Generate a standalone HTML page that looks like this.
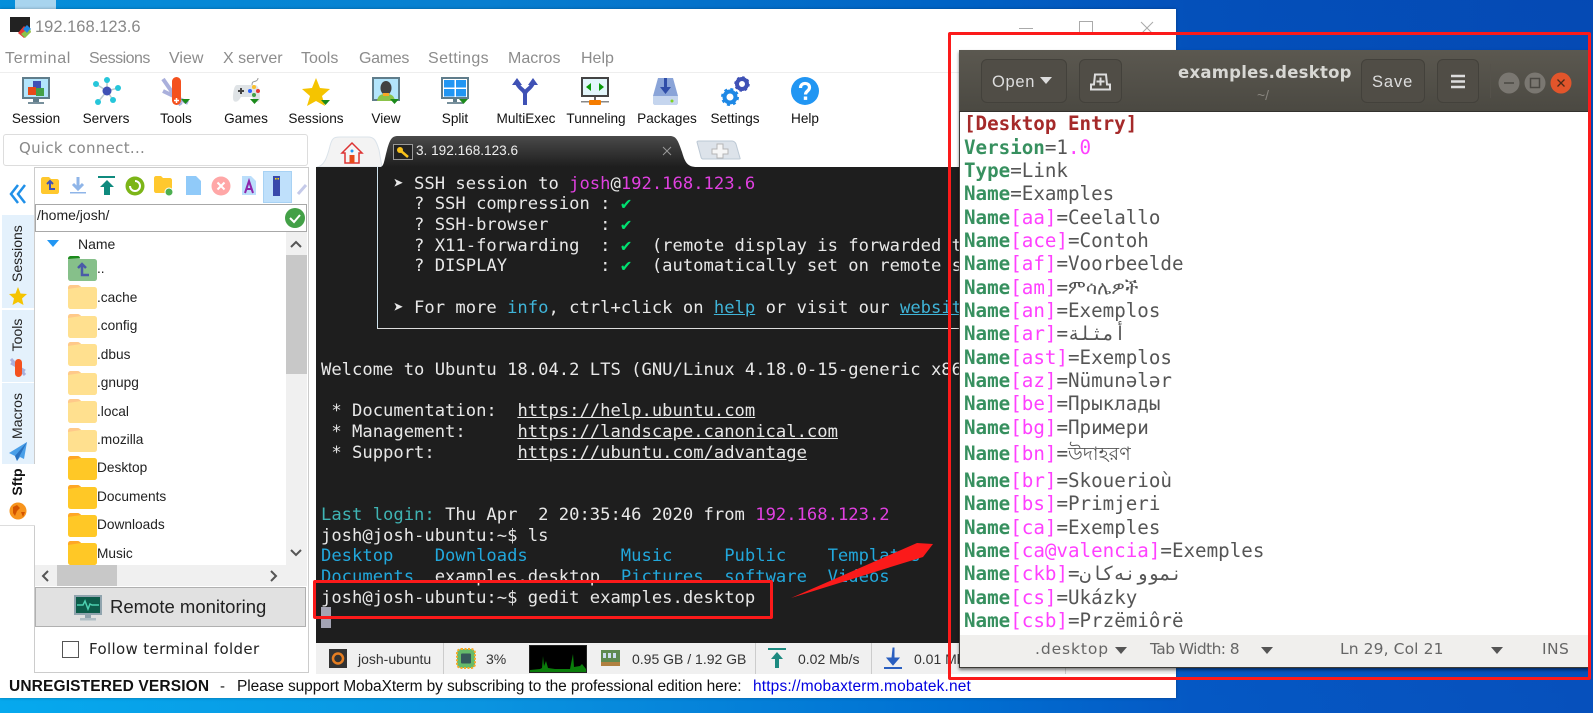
<!DOCTYPE html>
<html><head><meta charset="utf-8"><style>
html,body{margin:0;padding:0}
body{width:1593px;height:713px;overflow:hidden;position:relative;font-family:"Liberation Sans",sans-serif;background:linear-gradient(180deg,rgba(0,50,150,.22),rgba(0,50,150,0)),linear-gradient(90deg,#06a9ee 0,#0a94e0 30%,#0070d2 60%,#0558c4 75%,#0650bc 100%)}
.a{position:absolute}
.t{position:absolute;white-space:nowrap;line-height:1}
svg{position:absolute;overflow:visible}
.m{font-size:16px;color:#8c8c8c;top:51px}
.l{font-size:13.6px;color:#111;top:112px;width:80px;text-align:center}
.f{font-size:13.7px;color:#222;left:97px}
#term{position:absolute;left:321px;top:173.6px;margin:0;font:17.18px/20.7px "DejaVu Sans Mono",monospace;color:#e8e8e8;white-space:pre}
.c{color:#22a8dc}.p{color:#e040e0}.u{text-decoration:underline}.k{color:#00e070}.ci{color:#3fb4d8;}
#ged div{height:23.35px;line-height:23.35px;white-space:pre}
#ged b{color:#37905f}#ged i{font-style:normal;color:#ff40ff}
.v{position:absolute;transform:rotate(-90deg);white-space:nowrap;font-size:14px;color:#222;line-height:1}
.s{font-size:14px;color:#333;top:652px}
.g{font-size:15.5px;color:#666;top:642px;font-family:"DejaVu Sans",sans-serif}
.b{position:absolute;background:#504d46;border:1px solid #43413b;border-radius:6px;box-sizing:border-box}
</style></head><body>
<div class="a" style="left:15px;top:0;width:41px;height:9px;background:#a8d4ee"></div>
<div class="a" style="left:0;top:9px;width:1176px;height:689px;background:#fff;box-shadow:0 0 3px rgba(0,0,0,.3)"></div>
<svg style="left:10px;top:17px" width="21" height="21" viewBox="0 0 21 21"><rect y="0" width="20" height="15" fill="#222"/><path d="M8 16l6-7 7 6-7 6z" fill="#e53935"/><path d="M13 12l4-4 4 4-4 4z" fill="#1e88e5"/><path d="M11 17l4-3 2 2 3-4 1 3-6 6z" fill="#8bc34a"/></svg>
<div class="t" style="left:35px;top:19px;font-size:16.5px;color:#888">192.168.123.6</div>
<div class="a" style="left:1019px;top:28px;width:14px;height:1px;background:#aaa"></div>
<div class="a" style="left:1079px;top:21px;width:12px;height:12px;border:1px solid #aaa"></div>
<svg style="left:1140px;top:21px" width="14" height="14"><path d="M1 1l12 12M13 1L1 13" stroke="#aaa" fill="none"/></svg>
<div class="t m" style="left:5px;letter-spacing:.7px">Terminal</div><div class="t m" style="left:89px;letter-spacing:-.5px">Sessions</div><div class="t m" style="left:169px">View</div><div class="t m" style="left:223px">X server</div><div class="t m" style="left:301px">Tools</div><div class="t m" style="left:359px;letter-spacing:-.3px">Games</div><div class="t m" style="left:428px;letter-spacing:.4px">Settings</div><div class="t m" style="left:508px">Macros</div><div class="t m" style="left:581px">Help</div>
<div class="a" style="left:0;top:72px;width:1176px;height:1px;background:#eee"></div>

<svg style="left:22px;top:77px" width="29" height="29"><rect width="28" height="22" fill="#607d8b"/><rect x="2" y="2" width="24" height="18" fill="#b3e5fc"/><rect x="11" y="22" width="6" height="4" fill="#607d8b"/><rect x="6" y="25" width="16" height="2" fill="#78909c"/><rect x="11" y="4" width="8" height="8" fill="#3f51b5"/><rect x="6" y="10" width="8" height="8" fill="#e64a19"/><rect x="14" y="11" width="8" height="8" fill="#43a047"/></svg>
<svg style="left:92px;top:77px" width="30" height="29"><path d="M15 14L4 7M15 14L15 3M15 14L26 11M15 14L21 23M15 14L6 25" stroke="#bcc" stroke-width="1.5"/><circle cx="15" cy="14" r="4.5" fill="#3f51b5"/><circle cx="4" cy="7" r="3" fill="#26c6da"/><circle cx="15" cy="3" r="3" fill="#26c6da"/><circle cx="26" cy="11" r="3" fill="#26c6da"/><circle cx="21" cy="23" r="3" fill="#26c6da"/><circle cx="6" cy="25" r="3" fill="#26c6da"/></svg>
<svg style="left:162px;top:77px" width="30" height="29"><path d="M1 2l18 26M26 26L1 14" stroke="#aab0dc" stroke-width="4"/><rect x="10" y="0" width="9" height="28" rx="4.5" fill="#f4511e"/><path d="M14.500 21v5M12 23.500h5" stroke="#fff" stroke-width="1.500"/><path d="M19 22h9l-4.500 5z" fill="#1b8a1b"/></svg>
<svg style="left:232px;top:77px" width="30" height="29"><path d="M20 8c0-4 2-3 4-4s2-2 2-3" stroke="#999" fill="none"/><path d="M5 8h18c4 0 5 8 5 13 0 5-4 5-6 2l-2-3H9l-2 3c-3 3-6 2-6-2 0-5 1-13 4-13z" fill="#dfe3e6"/><rect x="6" y="13" width="6" height="2" fill="#444"/><rect x="8" y="11" width="2" height="6" fill="#444"/><circle cx="22" cy="10" r="2" fill="#fbc02d"/><circle cx="18" cy="14" r="2" fill="#2962ff"/><circle cx="26" cy="14" r="2" fill="#e53935"/><circle cx="22" cy="18" r="2" fill="#43a047"/><path d="M18 22h9l-4.500 5z" fill="#1b8a1b"/></svg>
<svg style="left:302px;top:78px" width="30" height="28"><path d="M14 0l4 10 10 1-8 7 3 10-9-5-9 5 3-10-8-7 10-1z" fill="#f5c400"/><path d="M19 22h9l-4.500 5z" fill="#1b8a1b"/></svg>
<svg style="left:372px;top:77px" width="30" height="29"><rect width="28" height="24" fill="#607d8b"/><rect x="2" y="2" width="24" height="20" fill="#b3e5fc"/><path d="M5 24c1-6 4-7 9-7s8 1 9 7z" fill="#8bc34a"/><ellipse cx="14" cy="11" rx="5.500" ry="7" fill="#424242"/><rect x="11" y="16" width="6" height="3" fill="#f9a825"/><path d="M18 22h9l-4.500 5z" fill="#1b8a1b"/></svg>
<svg style="left:441px;top:77px" width="30" height="29"><rect width="28" height="22" fill="#607d8b"/><rect x="2" y="2" width="24" height="18" fill="#fff"/><rect x="3" y="3" width="10.500" height="7.500" fill="#2196f3"/><rect x="15" y="3" width="10" height="7.500" fill="#2196f3"/><rect x="3" y="12" width="10.500" height="7.500" fill="#2196f3"/><rect x="15" y="12" width="10" height="7.500" fill="#2196f3"/><rect x="6" y="25" width="16" height="2" fill="#78909c"/><rect x="12" y="22" width="4" height="3" fill="#607d8b"/><path d="M18 22h9l-4.500 5z" fill="#1b8a1b"/></svg>
<svg style="left:511px;top:77px" width="29" height="29"><path d="M14 28V17C14 13 8 12 6 6M14 17C14 13 20 12 22 6" stroke="#3f51b5" stroke-width="4" fill="none"/><path d="M1 8l5-7 5 7zM17 8l5-7 5 7z" fill="#3f51b5"/></svg>
<svg style="left:581px;top:77px" width="29" height="29"><rect width="28" height="20" fill="#444"/><rect x="2" y="2" width="24" height="16" fill="#e3f6fb"/><path d="M5 10l5-4v8zM14 10h-4M23 10l-5-4v8z" fill="#0a9a0a"/><rect x="13" y="20" width="2" height="4" fill="#666"/><rect y="24" width="28" height="1.500" fill="#888"/><rect x="8" y="23" width="12" height="5" rx="1" fill="#f57c00"/></svg>
<svg style="left:652px;top:77px" width="27" height="29"><path d="M6 1h15l5 18v6c0 2-1 3-3 3H4c-2 0-3-1-3-3v-6z" fill="#8aa4d8"/><path d="M1 19h25v6c0 2-1 3-3 3H4c-2 0-3-1-3-3z" fill="#c5d5ee"/><rect x="12" y="1" width="3" height="10" fill="#2f4da8"/><path d="M8 10h11l-5.500 7z" fill="#2f4da8"/><circle cx="20" cy="24" r="1.500" fill="#7ed321"/></svg>
<svg style="left:721px;top:77px" width="30" height="29"><circle cx="21" cy="7" r="5" fill="none" stroke="#3f51b5" stroke-width="4"/><circle cx="21" cy="7" r="7" fill="none" stroke="#3f51b5" stroke-width="1.500" stroke-dasharray="2.500 3"/><circle cx="9" cy="20" r="5.500" fill="none" stroke="#1e88e5" stroke-width="4"/><circle cx="9" cy="20" r="8" fill="none" stroke="#1e88e5" stroke-width="2" stroke-dasharray="3 3.300"/></svg>
<svg style="left:791px;top:77px" width="29" height="29"><circle cx="14" cy="14" r="14" fill="#2196f3"/><path d="M9.500 11c0-6 9-6 9-.5 0 3.500-4 3.500-4 7" stroke="#fff" stroke-width="3.200" fill="none"/><rect x="12.800" y="19.500" width="3.400" height="3.400" fill="#fff"/></svg>

<div class="t l" style="left:-4px">Session</div><div class="t l" style="left:66px">Servers</div><div class="t l" style="left:136px">Tools</div><div class="t l" style="left:206px">Games</div><div class="t l" style="left:276px">Sessions</div><div class="t l" style="left:346px">View</div><div class="t l" style="left:415px">Split</div><div class="t l" style="left:486px">MultiExec</div><div class="t l" style="left:556px">Tunneling</div><div class="t l" style="left:627px">Packages</div><div class="t l" style="left:695px">Settings</div><div class="t l" style="left:765px">Help</div>

<div class="a" style="left:3px;top:134px;width:303px;height:30px;border:1px solid #ddd;border-radius:3px"></div>
<div class="t" style="left:19px;top:141px;font:15px/1 'DejaVu Sans',sans-serif;color:#888;letter-spacing:.3px">Quick connect...</div>

<svg style="left:316px;top:136px" width="440" height="32"><path d="M1 31C8 30 11 22 14 10 16 2 18 1 24 1H52C58 1 60 4 63 14L66 31z" fill="#f3f3f3" stroke="#dbe3ea"/><path d="M64 31C68 31 68 25 71 14 74 3 76 0 82 0H354C360 0 362 4 366 16 369 26 371 31 381 31z" fill="url(#tg)"/><defs><linearGradient id="tg" x1="0" y1="0" x2="0" y2="1"><stop offset="0" stop-color="#4a4a4a"/><stop offset="1" stop-color="#1e1e1e"/></linearGradient></defs><path d="M381 6c0-1 1-1 2-1h33c2 0 3 1 4 3l4 14c.5 1 0 1-1 1H387c-1 0-2-1-2-2z" fill="#dde3ea" stroke="#bcc8d4"/><path d="M401 8h6v5h5v5h-5v4h-6v-4h-5v-5h5z" fill="#f6f6f6" stroke="#b5b5b5"/></svg>
<svg style="left:342px;top:143px" width="20" height="20"><path d="M10 0L0 10h3v10h14V10h3z" fill="#f5f5f5" stroke="#d33" stroke-width="1.500"/><rect x="7.500" y="12" width="5" height="8" fill="#e64a19"/><circle cx="10" cy="8" r="1.500" fill="#2196f3"/></svg>
<div class="a" style="left:393px;top:144px;width:18px;height:14px;border:1px solid #999;background:#222"></div>
<svg style="left:395px;top:146px" width="16" height="12"><circle cx="5" cy="4" r="3" fill="#f9c21a"/><path d="M6 5l7 6" stroke="#f9c21a" stroke-width="2.500"/></svg>
<div class="t" style="left:416px;top:144px;font-size:13.6px;color:#eee">3. 192.168.123.6</div>
<svg style="left:662px;top:146px" width="10" height="10"><path d="M1 1l8 8M9 1L1 9" stroke="#999" stroke-width="1"/></svg>

<div class="a" style="left:316px;top:167px;width:860px;height:476px;background:#1e1e1e"></div>
<div class="a" style="left:377px;top:167px;width:1px;height:162px;background:#cfe3ee"></div>
<div class="a" style="left:377px;top:328px;width:600px;height:1px;background:#ddd"></div>
<pre id="term">       ➤ SSH session to <span class="p">josh</span>@<span class="p">192.168.123.6</span>
         ? SSH compression : <span class="k">✔</span>
         ? SSH-browser     : <span class="k">✔</span>
         ? X11-forwarding  : <span class="k">✔</span>  (remote display is forwarded through SSH)
         ? DISPLAY         : <span class="k">✔</span>  (automatically set on remote server)

       ➤ For more <span class="ci">info</span>, ctrl+click on <span class="ci u">help</span> or visit our <span class="ci u">website</span>


Welcome to Ubuntu 18.04.2 LTS (GNU/Linux 4.18.0-15-generic x86_64)

 * Documentation:  <span class="u">https://help.ubuntu.com</span>
 * Management:     <span class="u">https://landscape.canonical.com</span>
 * Support:        <span class="u">https://ubuntu.com/advantage</span>


<span style="color:#3fb4b4">Last login:</span> Thu Apr  2 20:35:46 2020 from <span class="p">192.168.123.2</span>
josh@josh-ubuntu:~$ ls
<span class="c">Desktop    Downloads         Music     Public    Templates</span>
<span class="c">Documents</span>  examples.desktop  <span class="c">Pictures  software  Videos</span>
josh@josh-ubuntu:~$ gedit examples.desktop</pre>
<div class="a" style="left:321px;top:607px;width:10px;height:21px;background:#a4a4b4"></div>

<div class="a" style="left:316px;top:643px;width:860px;height:31px;background:#f0f0f0"></div>
<div class="a" style="left:443px;top:643px;width:1px;height:31px;background:#ccc"></div><div class="a" style="left:755px;top:643px;width:1px;height:31px;background:#ccc"></div><div class="a" style="left:871px;top:643px;width:1px;height:31px;background:#ccc"></div><div class="a" style="left:1065px;top:643px;width:1px;height:31px;background:#ccc"></div>
<svg style="left:329px;top:649px" width="18" height="19"><rect width="18" height="19" fill="#333"/><circle cx="9" cy="9.500" r="5" fill="none" stroke="#e67e22" stroke-width="2.500"/></svg>
<div class="t s" style="left:358px">josh-ubuntu</div>
<svg style="left:456px;top:648px" width="20" height="21"><rect x="1" y="1" width="18" height="19" rx="4" fill="#66bb6a" stroke="#f9a825" stroke-dasharray="2 1.500" stroke-width="2"/><rect x="5" y="5.500" width="10" height="10" rx="1" fill="#37595a"/></svg>
<div class="t s" style="left:486px">3%</div>
<div class="a" style="left:529px;top:645px;width:58px;height:28px;background:#000;border:1px solid #222;box-sizing:border-box"></div>
<svg style="left:530px;top:646px" width="56" height="26"><path d="M0 26V24L10 23 12 22 13 10 14 20 16 15 18 22 25 23 40 23 43 8 44 21 50 20 52 18 56 23V26z" fill="#0a7d0a"/></svg>
<svg style="left:601px;top:650px" width="20" height="17"><rect width="19" height="12" fill="#5d8a50"/><rect x="2" y="3" width="3" height="5" fill="#cde"/><rect x="7" y="3" width="3" height="5" fill="#cde"/><rect x="12" y="3" width="3" height="5" fill="#cde"/><rect y="12" width="19" height="4" fill="#b08040"/></svg>
<div class="t s" style="left:632px">0.95 GB / 1.92 GB</div>
<svg style="left:768px;top:648px" width="19" height="21"><rect width="18" height="2" fill="#1c8a80"/><path d="M9 4l6 7h-4v9H7v-9H3z" fill="#1c8a80"/></svg>
<div class="t s" style="left:798px">0.02 Mb/s</div>
<svg style="left:884px;top:648px" width="19" height="21"><path d="M9 0h1v10h5l-6 7-6-7h5z" fill="#2a5fc0" stroke="#2a5fc0"/><rect y="19" width="18" height="2" fill="#2a5fc0"/></svg>
<div class="t s" style="left:914px">0.01 Mb/s</div>

<div class="t" style="left:9px;top:679px;font-size:15.5px;font-weight:bold;color:#111;letter-spacing:.15px">UNREGISTERED VERSION</div>
<div class="t" style="left:220px;top:679px;font-size:15px;color:#111">-</div>
<div class="t" style="left:237px;top:679px;font-size:15.5px;color:#111;letter-spacing:-.1px">Please support MobaXterm by subscribing to the professional edition here:</div>
<div class="t" style="left:753px;top:679px;font-size:15.5px;color:#0000e0;letter-spacing:.15px">https://mobaxterm.mobatek.net</div>

<svg style="left:9px;top:184px" width="18" height="22"><path d="M9 1L2 10l7 9M16 1L9 10l7 9" stroke="#2090e8" stroke-width="2.500" fill="none"/></svg>
<div class="a" style="left:2px;top:215px;width:32px;height:93px;background:#e4f1fc"></div>
<div class="a" style="left:2px;top:310px;width:32px;height:72px;background:#e4f1fc"></div>
<div class="a" style="left:2px;top:383px;width:32px;height:81px;background:#e4f1fc"></div>
<div class="a" style="left:34px;top:167px;width:275px;height:506px;border:1px solid #ccc;border-right:1px solid #ccc;box-sizing:border-box;background:#fff"></div>
<div class="a" style="left:0;top:464px;width:35px;height:61px;background:#fff;border-bottom:1px solid #ddd"></div>
<div class="v" style="left:-7px;top:251px;width:48px;text-align:center">Sessions</div>
<svg style="left:9px;top:287px" width="18" height="18"><path d="M9 0l2.500 6.500 6.500.5-5 4.500 1.500 6.500L9 15l-5.500 3L5 11.500 0 7l6.500-.5z" fill="#f5c400"/></svg>
<div class="v" style="left:-3px;top:328px;width:40px;text-align:center">Tools</div>
<svg style="left:9px;top:357px" width="18" height="20"><path d="M2 2l14 16M16 14L2 6" stroke="#aab0dc" stroke-width="3"/><rect x="6" y="2" width="7" height="18" rx="3.500" fill="#f4511e"/></svg>
<div class="v" style="left:-9px;top:409px;width:52px;text-align:center">Macros</div>
<svg style="left:9px;top:441px" width="18" height="20"><path d="M18 1L0 12l6 3 2 5 3-4 4 2z" fill="#4a9fe8"/><path d="M18 1L6 15l2 5z" fill="#2a72c0"/></svg>
<div class="v" style="left:-3px;top:475px;width:40px;text-align:center;font-weight:bold;color:#111">Sftp</div>
<svg style="left:9px;top:502px" width="18" height="18"><circle cx="9" cy="9" r="8.500" fill="#f7941d"/><path d="M4 5l4-2 3 3-3 3-2 5-2-3zM12 10l4 0-2 5z" fill="#d35400"/></svg>

<div class="a" style="left:263px;top:171px;width:29px;height:32px;background:#bfe0fb;border:1px solid #a8d2f4;box-sizing:border-box"></div>
<svg style="left:40px;top:176px" width="270" height="24">
<path d="M1 3c0-1 1-2 2-2h6l2 2h6c1 0 2 1 2 2v11c0 1-1 2-2 2H3c-1 0-2-1-2-2z" fill="#ffc82e"/><path d="M10 5v8h5M7 8l3-3 3 3" stroke="#3f51b5" stroke-width="2" fill="none"/>
<path d="M38 1v11M33 8l5 5 5-5" stroke="#8fb5e8" stroke-width="3" fill="none"/><rect x="30" y="16" width="16" height="1.500" fill="#8fb5e8"/>
<rect x="58" y="0" width="17" height="2" fill="#0f8a7e"/><path d="M67 4l7 7h-4v8h-6v-8h-4z" fill="#0f8a7e"/>
<circle cx="95" cy="10" r="9.500" fill="#7cb518"/><path d="M90 10a5 5 0 1 0 5-5" stroke="#fff" stroke-width="2" fill="none"/>
<path d="M114 2c0-1 1-2 2-2h5l2 2h7c1 0 2 1 2 2v11c0 1-1 2-2 2h-14c-1 0-2-1-2-2z" fill="#ffc82e"/><circle cx="129" cy="16" r="4" fill="#4caf50" stroke="#fff"/>
<path d="M146 0h10l5 5v14h-15z" fill="#90caf9"/>
<circle cx="181" cy="10" r="9.500" fill="#ffa7a7"/><path d="M177.500 6.500l7 7m0-7l-7 7" stroke="#fff" stroke-width="2"/>
<path d="M202 0h9l5 5v14h-14z" fill="#bbdefb"/><path d="M205 17l4-12 4 12M206 13h6" stroke="#8e24aa" stroke-width="2" fill="none"/>
<rect x="233" y="0" width="7" height="20" fill="#3949ab"/><rect x="235" y="2" width="1.500" height="1.500" fill="#fd0"/><rect x="237.500" y="2" width="1.500" height="1.500" fill="#fd0"/>
<path d="M258 18l8-9" stroke="#c5cae9" stroke-width="3"/>
</svg>
<div class="a" style="left:35px;top:204px;width:272px;height:28px;border:1px solid #a8a8a8;box-sizing:border-box"></div>
<div class="t" style="left:37px;top:208px;font-size:14px;color:#222">/home/josh/</div>
<svg style="left:285px;top:208px" width="20" height="20"><circle cx="10" cy="10" r="10" fill="#43a047"/><path d="M5 10l4 4 6-7" stroke="#fff" stroke-width="2" fill="none"/></svg>
<svg style="left:47px;top:240px" width="12" height="7"><path d="M0 0h12L6 7z" fill="#2196f3"/></svg>
<div class="t" style="left:78px;top:237px;font-size:14px;color:#222">Name</div>
<div class="a" style="left:286px;top:232px;width:21px;height:333px;background:#f0f0f0"></div>
<div class="a" style="left:286px;top:255px;width:21px;height:119px;background:#c8c8c8"></div>
<svg style="left:291px;top:241px" width="10" height="8"><path d="M0 6l5-5 5 5" stroke="#555" stroke-width="2" fill="none"/></svg>
<svg style="left:291px;top:549px" width="10" height="8"><path d="M0 1l5 5 5-5" stroke="#555" stroke-width="2" fill="none"/></svg>
<div class="a" style="left:35px;top:565px;width:272px;height:21px;background:#f0f0f0"></div>
<div class="a" style="left:57px;top:565px;width:60px;height:21px;background:#c8c8c8"></div>
<svg style="left:42px;top:571px" width="8" height="10"><path d="M6 0L1 5l5 5" stroke="#555" stroke-width="2" fill="none"/></svg>
<svg style="left:269px;top:571px" width="8" height="10"><path d="M2 0l5 5-5 5" stroke="#555" stroke-width="2" fill="none"/></svg>

<svg style="left:68px;top:256px" width="29" height="316">
<defs><g id="h"><path d="M0 3c0-2 1-3 3-3h6c2 0 3 1 4 2h13c2 0 3 1 3 3v16c0 2-1 3-3 3H3c-2 0-3-1-3-3z" fill="#ffe08f"/><path d="M0 4c0-3 1-4 3-4h6c2 0 3 1 4 2z" fill="#ffc98a"/></g><g id="n"><path d="M0 3c0-2 1-3 3-3h6c2 0 3 1 4 2h13c2 0 3 1 3 3v16c0 2-1 3-3 3H3c-2 0-3-1-3-3z" fill="#ffc826"/><path d="M0 4c0-3 1-4 3-4h6c2 0 3 1 4 2z" fill="#ffa726"/></g></defs>
<path d="M0 5c0-2 0-4 3-4h7c1 0 2 1 2 2h14c2 0 3 1 3 3v16c0 2-1 3-3 3H3c-2 0-3-1-3-3z" fill="#86c08a"/><path d="M0 3c0-2 1-3 3-3h7c1 0 2 1 2 2z" fill="#1b8a1b"/><path d="M14 8v11h7M10 12l4-4 4 4" stroke="#4a5aa8" stroke-width="2.500" fill="none"/>
<use href="#h" y="29"/><use href="#h" y="58"/><use href="#h" y="86"/><use href="#h" y="115"/><use href="#h" y="143"/><use href="#h" y="172"/>
<use href="#n" y="200"/><use href="#n" y="229"/><use href="#n" y="257"/><use href="#n" y="285"/>
</svg>
<div class="t f" style="top:262px">..</div><div class="t f" style="top:291px">.cache</div><div class="t f" style="top:319px">.config</div><div class="t f" style="top:348px">.dbus</div><div class="t f" style="top:376px">.gnupg</div><div class="t f" style="top:405px">.local</div><div class="t f" style="top:433px">.mozilla</div><div class="t f" style="top:461px">Desktop</div><div class="t f" style="top:490px">Documents</div><div class="t f" style="top:518px">Downloads</div><div class="t f" style="top:547px">Music</div>

<div class="a" style="left:35px;top:587px;width:271px;height:40px;background:#e1e1e1;border:1px solid #b0b0b0;box-sizing:border-box"></div>
<svg style="left:74px;top:595px" width="28" height="26"><rect width="28" height="20" fill="#90a4ae"/><rect x="2" y="2" width="24" height="16" fill="#0d5c4a"/><path d="M3 10h6l2-4 3 8 2-5 2 1h7" stroke="#4dd0b0" stroke-width="1.500" fill="none"/><rect x="11" y="20" width="6" height="3" fill="#90a4ae"/><rect x="6" y="23" width="16" height="2.500" fill="#b0bec5"/></svg>
<div class="t" style="left:110px;top:598px;font-size:18.5px;color:#222">Remote monitoring</div>
<div class="a" style="left:62px;top:641px;width:17px;height:17px;border:1px solid #555;box-sizing:border-box"></div>
<div class="t" style="left:89px;top:642px;font:15px/1 'DejaVu Sans',sans-serif;color:#222;letter-spacing:.35px">Follow terminal folder</div>

<div class="a" style="left:959px;top:50px;width:630px;height:618px;background:#fff;border:1px solid #3d3b36;border-top:none;box-sizing:border-box;box-shadow:0 2px 3px rgba(0,0,0,.5)"></div>
<div class="a" style="left:959px;top:50px;width:630px;height:62px;background:linear-gradient(#5b5850,#4b4942);border-bottom:1px solid #33312d;box-sizing:border-box"></div>
<div class="b" style="left:981px;top:59px;width:86px;height:44px"></div>
<div class="t" style="left:992px;top:74px;font-size:16.5px;color:#ddd;letter-spacing:.7px">Open</div>
<svg style="left:1040px;top:77px" width="12" height="7"><path d="M0 0h12L6 7z" fill="#ddd"/></svg>
<div class="b" style="left:1079px;top:59px;width:43px;height:44px"></div>
<svg style="left:1090px;top:73px" width="22" height="18"><path d="M1 16.500h19v-5h-3l-1-10H5L4 11.500H1z" fill="none" stroke="#ddd" stroke-width="2"/><path d="M10.500 4.500v8M6.500 8.500h8" stroke="#ddd" stroke-width="2"/></svg>
<div class="t" style="left:1178px;top:65px;font:bold 16.5px/1 'DejaVu Sans',sans-serif;color:#d8d8d4;letter-spacing:.25px">examples.desktop</div>
<div class="t" style="left:1257px;top:88px;font-size:14px;color:#88857e">~/</div>
<div class="b" style="left:1361px;top:59px;width:64px;height:44px"></div>
<div class="t" style="left:1372px;top:74px;font-size:16.5px;color:#ddd;letter-spacing:.9px">Save</div>
<div class="b" style="left:1437px;top:59px;width:42px;height:44px"></div>
<svg style="left:1451px;top:74px" width="14" height="15"><path d="M0 2h14M0 7.500h14M0 13h14" stroke="#ddd" stroke-width="2.500"/></svg>
<div class="a" style="left:1490px;top:64px;width:1px;height:34px;background:#55524b"></div>
<svg style="left:1498px;top:72px" width="76" height="22"><circle cx="11" cy="11" r="10.500" fill="#7a7771"/><path d="M6 11h10" stroke="#4a4843" stroke-width="1.500"/><circle cx="37" cy="11" r="10.500" fill="#7a7771"/><rect x="32.500" y="6.500" width="9" height="9" fill="none" stroke="#4a4843" stroke-width="1.500"/><circle cx="63" cy="11" r="10.500" fill="#e2552b"/><path d="M59.500 7.500l7 7m0-7l-7 7" stroke="#4a2a18" stroke-width="1.300"/></svg>

<div id="ged" class="a" style="left:964px;top:112.3px;width:620px;height:522px;overflow:hidden;font:19.2px 'DejaVu Sans Mono','DejaVu Sans',monospace;color:#555">
<div style="color:#a52a2a;font-weight:bold">[Desktop Entry]</div>
<div><b>Version</b>=1<i>.0</i></div>
<div><b>Type</b>=Link</div>
<div><b>Name</b>=Examples</div>
<div><b>Name</b><i>[aa]</i>=Ceelallo</div>
<div><b>Name</b><i>[ace]</i>=Contoh</div>
<div><b>Name</b><i>[af]</i>=Voorbeelde</div>
<div><b>Name</b><i>[am]</i>=ምሳሌዎች</div>
<div><b>Name</b><i>[an]</i>=Exemplos</div>
<div><b>Name</b><i>[ar]</i>=أمثلة</div>
<div><b>Name</b><i>[ast]</i>=Exemplos</div>
<div><b>Name</b><i>[az]</i>=Nümunələr</div>
<div><b>Name</b><i>[be]</i>=Прыклады</div>
<div><b>Name</b><i>[bg]</i>=Примери</div>
<div style="height:30px;line-height:30px"><b>Name</b><i>[bn]</i>=উদাহরণ</div>
<div><b>Name</b><i>[br]</i>=Skouerioù</div>
<div><b>Name</b><i>[bs]</i>=Primjeri</div>
<div><b>Name</b><i>[ca]</i>=Exemples</div>
<div><b>Name</b><i>[ca@valencia]</i>=Exemples</div>
<div><b>Name</b><i>[ckb]</i>=نموونەکان</div>
<div><b>Name</b><i>[cs]</i>=Ukázky</div>
<div><b>Name</b><i>[csb]</i>=Przëmiôrë</div>
</div>
<div class="a" style="left:960px;top:635px;width:628px;height:32px;background:#f0efed"></div>
<div class="t g" style="left:1035px;letter-spacing:.9px">.desktop</div><svg style="left:1115px;top:647px" width="12" height="7"><path d="M0 0h12L6 7z" fill="#555"/></svg>
<div class="t g" style="left:1150px;letter-spacing:-.6px">Tab Width: 8</div><svg style="left:1261px;top:647px" width="12" height="7"><path d="M0 0h12L6 7z" fill="#555"/></svg>
<div class="t g" style="left:1340px;letter-spacing:.1px">Ln 29, Col 21</div><svg style="left:1491px;top:647px" width="12" height="7"><path d="M0 0h12L6 7z" fill="#555"/></svg>
<div class="t g" style="left:1542px;letter-spacing:.4px">INS</div>

<div class="a" style="left:948px;top:32px;width:643px;height:648px;border:3px solid #fb1a1a;border-radius:2px;box-sizing:border-box"></div>
<div class="a" style="left:313px;top:580px;width:460px;height:39px;border:3px solid #fb1a1a;border-radius:2px;box-sizing:border-box"></div>
<svg style="left:0;top:0" width="1593" height="713"><path d="M791 598L917 543 933 544 923 557z" fill="#fb1a1a"/></svg>
</body></html>
